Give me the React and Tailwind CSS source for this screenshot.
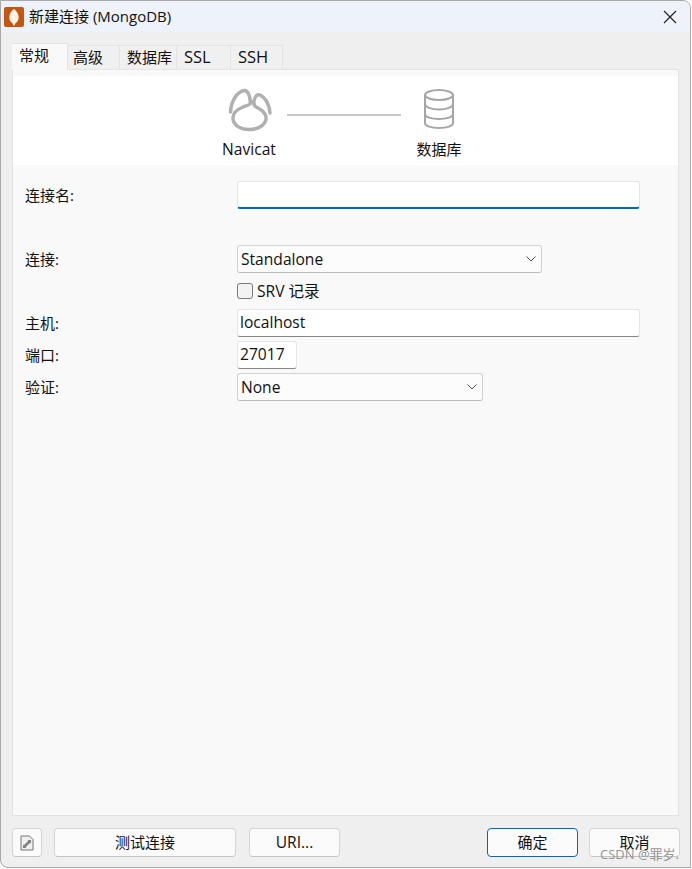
const FONT = "font-['Open_Sans','Noto_Sans_CJK_SC',sans-serif]";

const TABS = [
  { label: '常规', className: 'w-[56px] pl-[7px] text-[15px]', active: true },
  { label: '高级', className: 'w-[52px] pl-[5px] text-[15px]' },
  { label: '数据库', className: 'w-[57px] pl-[7px] text-[15px]' },
  { label: 'SSL', className: 'w-[54px] pl-[7px] text-[16.5px]' },
  { label: 'SSH', className: 'w-[52px] pl-[7px] text-[16.5px]' },
];

function Chevron() {
  return (
    <svg width="12" height="8" viewBox="0 0 12 8" fill="none" stroke="#555" strokeWidth="1">
      <path d="M1.5 1.5 L6 6 L10.5 1.5" />
    </svg>
  );
}

function NavicatLogo() {
  return (
    <svg width="50" height="48" viewBox="0 0 50 48" fill="none" stroke="#b0b0b0" strokeWidth="3.5" strokeLinecap="round">
      <path d="M6.5 27 C7 16 13 7 20 5.5 C24.5 5 26 12 26.5 18 C26 20.5 22 20.5 18 22.5 C12 25 8.5 29 9 34 C10 41 17 44.5 25 44.5 C33 44.5 41 41 42 34 C42.5 29 38 25 33 22.5 C30 21 29 18 30.5 14 C31.5 11 33.5 9 36 10 C41.5 12.5 45.5 20 46 28" />
    </svg>
  );
}

function DatabaseIcon() {
  return (
    <svg width="32" height="40" viewBox="0 0 32 40" fill="none" stroke="#a6a6a6" strokeWidth="2">
      <ellipse cx="16" cy="6" rx="14" ry="5" />
      <path d="M2 6 V34 C2 37 8 39 16 39 C24 39 30 37 30 34 V6" />
      <path d="M2 15 C2 18 8 20.5 16 20.5 C24 20.5 30 18 30 15" />
      <path d="M2 25 C2 28 8 30 16 30 C24 30 30 28 30 25" />
    </svg>
  );
}

function AppIcon() {
  return (
    <svg width="20" height="20" viewBox="0 0 20 20" className="shrink-0">
      <rect width="20" height="20" rx="2" fill="#c4560f" />
      <path d="M10 2 C14.5 5.5 15.5 10 14 13.5 C13 15.5 11 16 10.5 18.5 L9.5 18.5 C9 16 7 15.5 6 13.5 C4.5 10 5.5 5.5 10 2 Z" fill="#fdf3e8" />
    </svg>
  );
}

function DocIcon() {
  return (
    <svg width="14" height="16" viewBox="0 0 14 16" fill="none">
      <path d="M1 1 H9.5 L13 4.5 V15 H1 Z" fill="#efefef" stroke="#777" />
      <path d="M4 12 L10 6" stroke="#808080" strokeWidth="2.5" />
      <path d="M7.5 5 H11 V8.5 Z" fill="#808080" />
      <path d="M3 13 V9.5 L6.5 13 Z" fill="#808080" />
    </svg>
  );
}

function Row({ label, className = '', children }) {
  return (
    <div className={`flex items-center ${className}`}>
      <label className="w-[212px] shrink-0 text-[15px]">{label}</label>
      {children}
    </div>
  );
}

function TextBox({ value, focused, className }) {
  return (
    <div
      className={`flex items-center rounded-[3px] border border-[#e6e6e6] bg-white pl-[2px] text-[15.6px] ${
        focused ? 'border-b-2 border-b-[#0067c0]' : 'border-b-[#868686]'
      } ${className}`}
    >
      {value}
    </div>
  );
}

function Select({ value, className }) {
  return (
    <div className={`flex h-[28px] items-center justify-between rounded-[3px] border border-[#d2d2d2] border-b-[#bcbcbc] bg-[#fcfcfc] pl-[3px] pr-[4px] text-[15.6px] ${className}`}>
      <span className="pt-[2px]">{value}</span>
      <Chevron />
    </div>
  );
}

function Button({ children, primary, className = '' }) {
  return (
    <button
      className={`h-[29px] rounded-[4px] border bg-[#fbfbfb] ${
        primary ? 'border-[#0067c0]' : 'border-[#d4d4d4] border-b-[#c4c4c4]'
      } ${className}`}
    >
      {children}
    </button>
  );
}

export default function App() {
  return (
    <div className={`relative h-[869px] w-[692px] overflow-hidden bg-white text-[#111] ${FONT}`}>
      <div className="flex h-[868px] w-[691px] flex-col overflow-hidden rounded-tr-[8px] rounded-bl-[8px] border border-[#a8a8a8] bg-[#efefef]">
        <div className="flex h-[31px] shrink-0 items-center justify-between bg-[#eef2fa] pl-[3px] pr-[13px]">
          <div className="flex items-center gap-[5px]">
            <AppIcon />
            <span className="text-[15px]">新建连接 (MongoDB)</span>
          </div>
          <svg width="14" height="14" viewBox="0 0 14 14" stroke="#222" strokeWidth="1.2">
            <path d="M1 1 L13 13 M13 1 L1 13" />
          </svg>
        </div>

        <div className="flex flex-1 flex-col pl-[11px]">
          <div className="relative z-10 mt-[11px] flex h-[27px] items-end">
            {TABS.map(t => (
              <div
                key={t.label}
                className={`flex items-center border border-l-0 ${t.className} ${
                  t.active
                    ? 'h-[27px] border-l border-[#e2e2e2] border-b-[#f9f9f9] bg-[#f9f9f9] pb-[3px]'
                    : 'h-[25px] border-[#e4e4e4] bg-[#f0f0f0]'
                }`}
              >
                {t.label}
              </div>
            ))}
          </div>

          <div className="-mt-px flex w-[667px] flex-1 flex-col border border-[#e2e2e2] bg-[#f9f9f9]">
            <div className="mt-[6px] flex h-[89px] items-start bg-white pl-[198px] pt-[13px]">
              <div className="flex w-[76px] flex-col items-center">
                <div className="-mt-[4px] -mb-[1px] flex h-[55px] items-start justify-center">
                  <NavicatLogo />
                </div>
                <span className="text-[15.6px] leading-[20px]">Navicat</span>
              </div>
              <div className="mt-[25px] h-[2px] w-[114px] bg-[#c8c8c8]" />
              <div className="flex w-[76px] flex-col items-center">
                <div className="mb-[8px] flex h-[42px] items-start justify-center">
                  <DatabaseIcon />
                </div>
                <span className="text-[15px] leading-[20px]">数据库</span>
              </div>
            </div>

            <div className="flex flex-col pl-[12px] pt-[16px]">
              <Row label="连接名:">
                <TextBox value="" focused className="h-[28px] w-[403px]" />
              </Row>
              <Row label="连接:" className="mt-[36px]">
                <Select value="Standalone" className="w-[305px]" />
              </Row>
              <div className="ml-[212px] mt-[10px] flex h-[16px] items-center gap-[4px] text-[15.6px]">
                <span className="h-[16px] w-[16px] rounded-[3px] border border-[#7a7a7a] bg-[#f3f3f3]" />
                <span className="pt-[2px]">SRV 记录</span>
              </div>
              <Row label="主机:" className="mt-[10px]">
                <TextBox value="localhost" className="h-[28px] w-[403px]" />
              </Row>
              <Row label="端口:" className="mt-[4px]">
                <TextBox value="27017" className="h-[28px] w-[60px]" />
              </Row>
              <Row label="验证:" className="mt-[4px]">
                <Select value="None" className="w-[246px]" />
              </Row>
            </div>
          </div>

          <div className="mb-[10px] mt-[12px] flex w-[668px] items-center text-[15px]">
            <Button className="flex w-[30px] items-center justify-center">
              <DocIcon />
            </Button>
            <Button className="ml-[12px] w-[182px]">测试连接</Button>
            <Button className="ml-[13px] w-[91px] text-[15.6px]">URI...</Button>
            <Button primary className="ml-auto mr-[11px] w-[91px]">确定</Button>
            <Button className="w-[91px]">取消</Button>
          </div>
        </div>
      </div>

      <span className="absolute left-[600px] top-[846px] text-[13px] leading-[16px] text-[#8a8a8a] opacity-90">CSDN @罪岁.</span>
    </div>
  );
}
